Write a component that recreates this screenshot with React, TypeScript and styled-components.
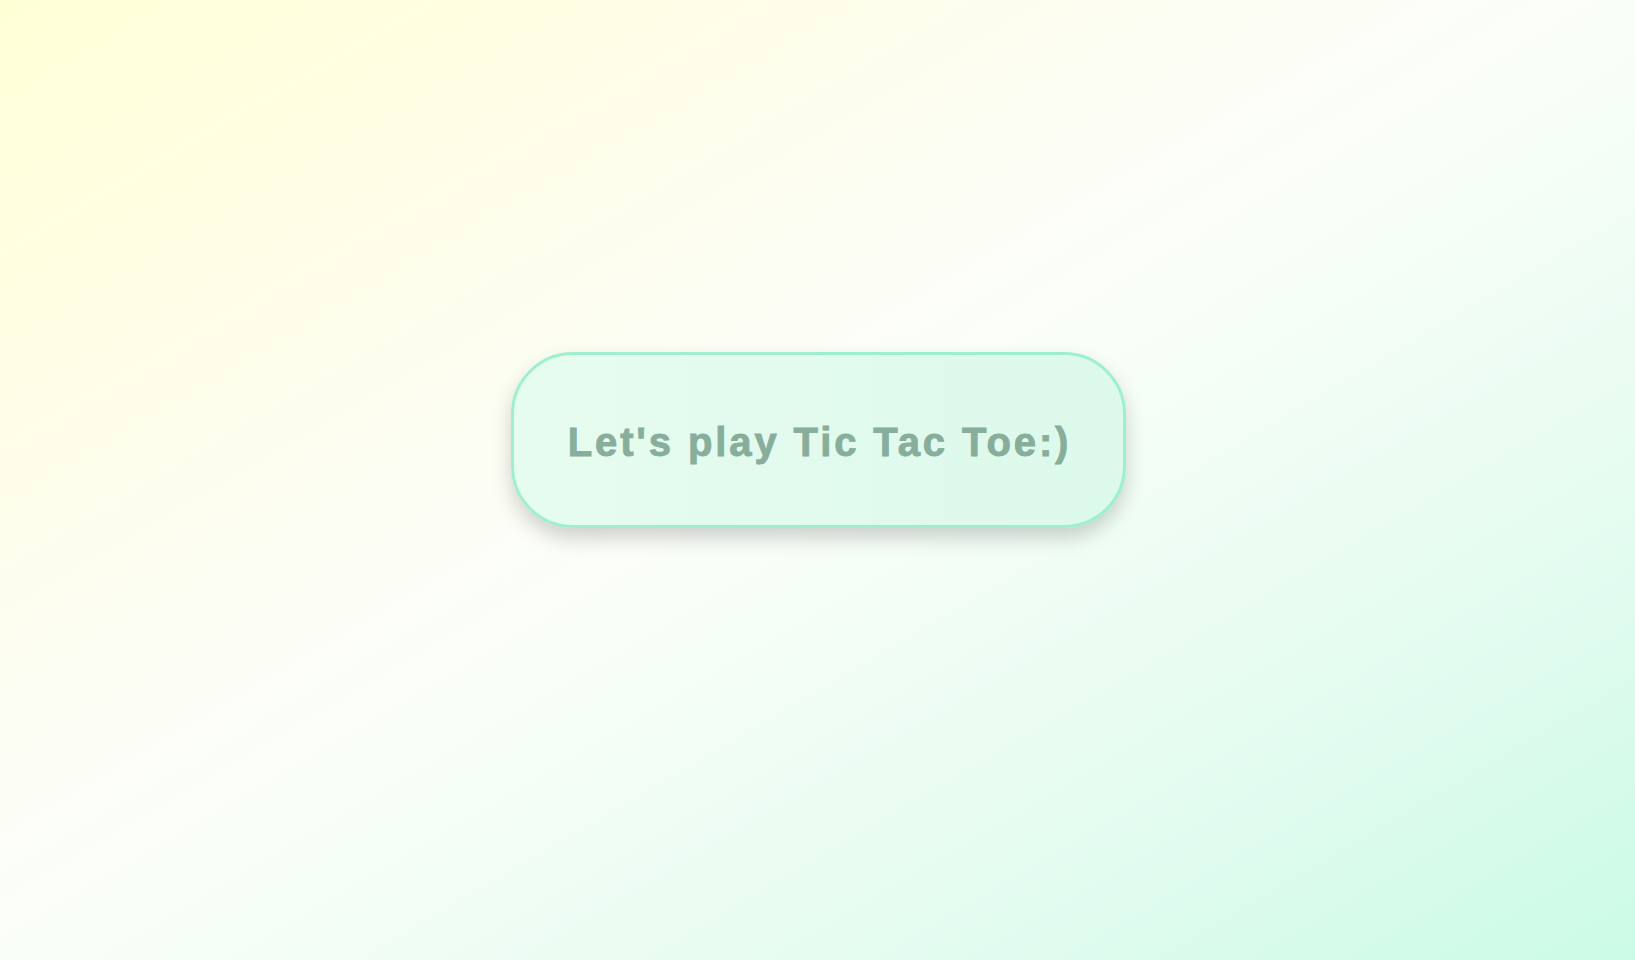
import React from "react";
import { createGlobalStyle, styled } from "styled-components";

const GlobalStyle = createGlobalStyle`
  html, body {
    margin: 0;
    padding: 0;
    height: 100%;
  }

  body {
    font-family: "Liberation Sans", Arial, sans-serif;
  }
`;

const App = () => {
  return (
    <>
      <GlobalStyle />
      <Page>
        <StartButton type="button">Let's play Tic Tac Toe:)</StartButton>
      </Page>
    </>
  );
};

const Page = styled.div`
  min-height: 100vh;
  box-sizing: border-box;
  display: flex;
  justify-content: center;
  align-items: flex-start;
  padding-top: 352px;
  background: linear-gradient(
    to bottom right,
    #ffffd6 0%,
    #fdfdf0 33%,
    #fbfef9 48%,
    #e6fcf1 75%,
    #cbfbe7 100%
  );
`;

const StartButton = styled.button`
  box-sizing: border-box;
  width: 615px;
  height: 176px;
  margin-left: 1px;
  display: flex;
  align-items: center;
  justify-content: center;
  border: 3px solid #9cf0cd;
  border-radius: 62px;
  background: linear-gradient(to right, #e6fcef, #dcf9ec);
  box-shadow: 0 10px 20px rgba(0, 0, 0, 0.18);
  font-family: "Liberation Sans", Arial, sans-serif;
  font-size: 40px;
  font-weight: 700;
  letter-spacing: 2.9px;
  color: #87ae9b;
  -webkit-text-stroke: 0.9px #87ae9b;
  padding: 4px 0 0 3px;
  cursor: pointer;
`;

export default App;
